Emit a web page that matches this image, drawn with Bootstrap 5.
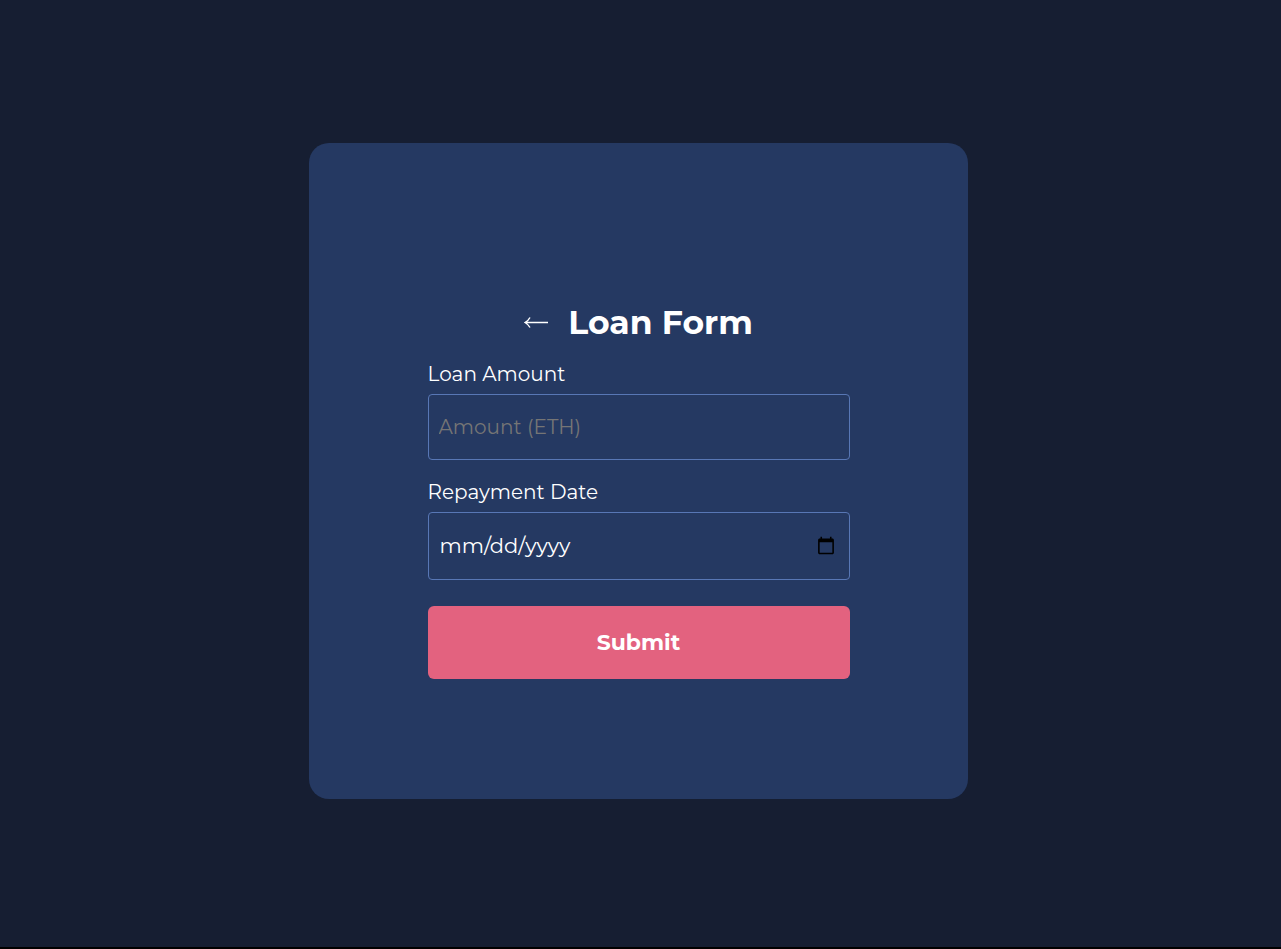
<!DOCTYPE html>
<html lang="en">
<head>
<meta charset="utf-8">
<meta name="viewport" content="width=device-width, initial-scale=1">
<title>Loan Form</title>
<link href="https://cdn.jsdelivr.net/npm/bootstrap@5.3.0/dist/css/bootstrap.min.css" rel="stylesheet">
<style>
body { background: #161e32; color: #fff; font-family: Montserrat, Inter, sans-serif; border-bottom: 2px solid #000; }
.loan-wrap { padding: 0 10px 5px 6px; }
.loan-panel { width: 100%; max-width: 659px; background: #253962; border-radius: 20px; padding: 159px 16px 120px; }
.loan-body { max-width: 422px; }
.loan-head { margin-bottom: 18px; }
.loan-title { font-size: 33px; line-height: 40px; font-weight: 700; }
.loan-label { font-size: 20px; line-height: 28px; margin-bottom: 6px; }
.loan-field, .loan-field:focus { background: transparent; color: #fff; border: 1px solid #5877b5; border-radius: 4px; height: 66px; padding: 0 10px; margin-bottom: 18px; font-size: 20px; box-shadow: none; }
.loan-field::placeholder { color: #757575; }
.loan-field.loan-date { height: 68px; padding-left: 11px; font-size: 21px; margin-bottom: 26px; }
.loan-date::-webkit-calendar-picker-indicator { width: 20px; height: 20px; padding: 0; margin-right: 3px; }
.loan-submit, .loan-submit:hover { background: #e3627f; color: #fff; border: 0; border-radius: 6px; height: 73px; font-size: 22px; font-weight: 700; }
</style>
</head>
<body class="min-vh-100 d-flex">
<main class="loan-wrap flex-fill d-flex align-items-center justify-content-center">
  <form class="loan-panel">
    <div class="loan-body mx-auto">
      <div class="loan-head d-flex align-items-center justify-content-center">
        <a href="#" class="d-flex me-3 pe-1" aria-label="Back">
          <svg width="24" height="14" viewBox="0 0 24 14" fill="none" stroke="#fff" stroke-width="1.4"><path d="M24 7.5H1M6 2.5Q4.500 5.500 1 7.500Q4.500 9.500 6 12.500"/></svg>
        </a>
        <h1 class="loan-title mb-0">Loan Form</h1>
      </div>
      <label for="amount" class="loan-label d-block">Loan Amount</label>
      <input id="amount" type="text" class="form-control loan-field" placeholder="Amount (ETH)">
      <label for="due" class="loan-label d-block">Repayment Date</label>
      <input id="due" type="date" class="form-control loan-field loan-date">
      <button type="submit" class="btn loan-submit w-100">Submit</button>
    </div>
  </form>
</main>
<script src="https://cdn.jsdelivr.net/npm/bootstrap@5.3.0/dist/js/bootstrap.bundle.min.js"></script>
</body>
</html>
